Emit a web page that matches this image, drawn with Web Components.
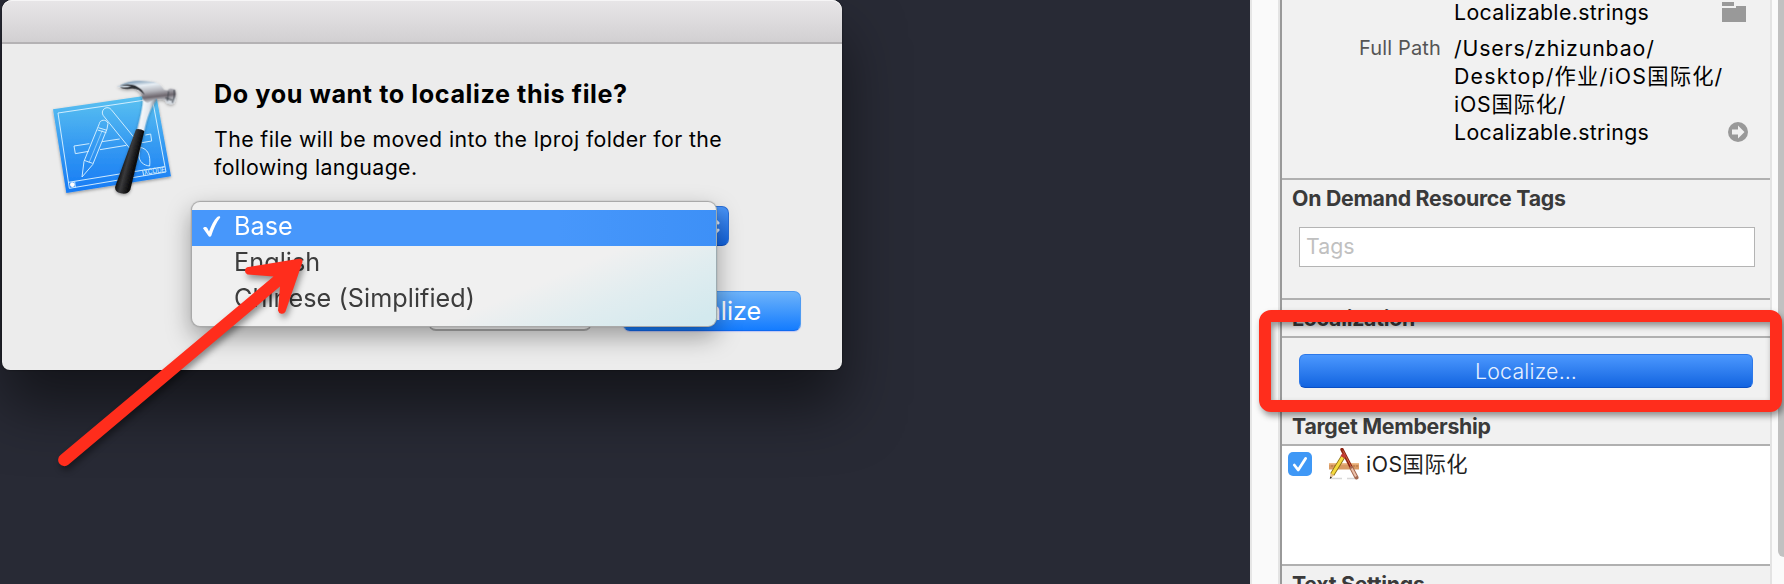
<!DOCTYPE html>
<html lang="en">
<head>
<meta charset="utf-8">
<title>Localize</title>
<style>
  html, body{
    margin: 0;
    width: 1784px;
    height: 584px;
    overflow: hidden;
  }
  body{
    font-family: Inter, "Noto Sans CJK SC", sans-serif;
    background: #282a35;
  }
</style>
</head>
<body>
<xcode-desktop>
  <sheet-dialog slot="editor">
    <xcode-icon slot="icon"></xcode-icon>
    <span slot="title">Do you want to localize this file?</span>
    <span slot="message">The file will be moved into the lproj folder for the following language.</span>
    <language-picker slot="field">
      <language-option selected>Base</language-option>
      <language-option>English</language-option>
      <language-option>Chinese (Simplified)</language-option>
    </language-picker>
    <push-button slot="actions" class="cancel"></push-button>
    <push-button slot="actions" kind="default">Localize</push-button>
  </sheet-dialog>

  <file-inspector slot="inspector">
    <path-info>
      <path-row icon="folder">Localizable.strings</path-row>
      <path-row label="Full Path" icon="reveal"><div style="letter-spacing: .85px">/Users/zhizunbao/</div><div style="letter-spacing: 1.2px">Desktop/作业/iOS国际化/</div><div style="letter-spacing: .8px">iOS国际化/</div><div>Localizable.strings</div></path-row>
    </path-info>
    <inspector-section style="--body: 82px">
      <span slot="heading">On Demand Resource Tags</span>
      <tags-field></tags-field>
    </inspector-section>
    <inspector-section ruled style="--body: 68px">
      <span slot="heading">Localization</span>
      <push-button kind="wide">Localize…</push-button>
    </inspector-section>
    <inspector-section ruled white style="--body: 118px">
      <span slot="heading">Target Membership</span>
      <target-row>iOS国际化</target-row>
    </inspector-section>
    <inspector-section style="--body: 40px">
      <span slot="heading">Text Settings</span>
    </inspector-section>
  </file-inspector>

  <arrow-mark slot="marks"></arrow-mark>
  <frame-mark slot="marks"></frame-mark>
</xcode-desktop>

<script>
class BaseElement extends HTMLElement{
  constructor(){
    super();
    this.attachShadow({mode: 'open'});
  }
  connectedCallback(){
    this.shadowRoot.innerHTML = `<style>${this.constructor.styles}</style>${this.render()}`;
  }
}

class XcodeDesktop extends BaseElement{
  static get styles(){
    return /* css */ `
      :host{
        display: flex;
        position: relative;
        width: 1784px;
        height: 584px;
        overflow: hidden;
      }
      .editor{
        width: 1248px;
        flex: none;
        padding-inline-start: 2px;
        background: #282a35;
        overflow: hidden;
      }
      .inspector{
        flex: 1;
        min-width: 0;
      }
    `
  }
  render(){
    return /* html */ `
      <div class="editor"><slot name="editor"></slot></div>
      <div class="inspector"><slot name="inspector"></slot></div>
      <slot name="marks"></slot>
    `
  }
}

class SheetDialog extends BaseElement{
  static get styles(){
    return /* css */ `
      :host{
        display: block;
        box-sizing: border-box;
        width: 840px;
        height: 370px;
        border-radius: 10px 10px 8px 8px;
        background: #ececec;
        box-shadow: 0 0 2px rgba(0,0,0,.6), 0 36px 60px rgba(0,0,0,.5);
      }
      .titlebar{
        box-sizing: border-box;
        height: 44px;
        border-radius: 10px 10px 0 0;
        border-bottom: 2px solid #b4b2b4;
        background: linear-gradient(#e8e6e8, #d2d0d2);
        box-shadow: inset 0 1px 0 #f6f5f6;
      }
      .content{
        display: grid;
        grid-template-columns: 150px 1fr;
        column-gap: 24px;
        padding-inline-start: 38px;
      }
      .icon{
        padding-block-start: 26px;
      }
      .text{
        padding-block-start: 34px;
      }
      h1{
        margin: 0 0 15px;
        font-size: 25.2px;
        line-height: 32px;
        font-weight: 700;
        letter-spacing: .58px;
        color: #000;
      }
      p{
        margin: 0 0 25px;
        width: 530px;
        font-size: 21.3px;
        line-height: 28px;
        font-weight: 430;
        letter-spacing: .4px;
        color: #000;
      }
      .actions{
        display: flex;
        justify-content: flex-end;
        gap: 31px;
        margin-block-start: 45px;
        padding-inline-end: 41px;
      }
    `
  }
  render(){
    return /* html */ `
      <div class="titlebar"></div>
      <div class="content">
        <div class="icon"><slot name="icon"></slot></div>
        <div class="text">
          <h1><slot name="title"></slot></h1>
          <p><slot name="message"></slot></p>
          <slot name="field"></slot>
          <div class="actions"><slot name="actions"></slot></div>
        </div>
      </div>
    `
  }
}

class XcodeIcon extends BaseElement{
  static get styles(){
    return /* css */ `
      :host{
        display: block;
        width: 150px;
        height: 140px;
      }
      svg{
        display: block;
      }
    `
  }
  render(){
    return /* html */ `
      <svg width="150" height="140" viewBox="0 0 450 420">
        <defs>
          <linearGradient id="paper" x1="0" y1="0" x2="0" y2="1">
            <stop offset="0" stop-color="#5cc3f0"/>
            <stop offset=".5" stop-color="#369bf2"/>
            <stop offset="1" stop-color="#157af5"/>
          </linearGradient>
          <linearGradient id="steel" gradientUnits="userSpaceOnUse" x1="310" y1="32" x2="318" y2="100">
            <stop offset="0" stop-color="#8ba6bd"/>
            <stop offset=".2" stop-color="#e8eff5"/>
            <stop offset=".5" stop-color="#b3b4bb"/>
            <stop offset=".75" stop-color="#6d666d"/>
            <stop offset="1" stop-color="#d5dbe2"/>
          </linearGradient>
          <linearGradient id="neck" x1="0" y1="0" x2="1" y2=".25">
            <stop offset="0" stop-color="#77808c"/>
            <stop offset=".35" stop-color="#f4f7fa"/>
            <stop offset=".65" stop-color="#dfe6ee"/>
            <stop offset="1" stop-color="#5d6773"/>
          </linearGradient>
          <linearGradient id="grip" gradientUnits="userSpaceOnUse" x1="250" y1="260" x2="288" y2="270">
            <stop offset="0" stop-color="#111"/>
            <stop offset=".4" stop-color="#3a3a3c"/>
            <stop offset="1" stop-color="#0b0b0d"/>
          </linearGradient>
          <filter id="soft" x="-20%" y="-20%" width="140%" height="150%">
            <feDropShadow dx="0" dy="4" stdDeviation="4" flood-opacity=".35"/>
          </filter>
        </defs>
        <path d="M39 118 348 73 393 319 79 369Z" fill="url(#paper)" filter="url(#soft)"/>
        <g fill="none" stroke="#d9f1ff" stroke-width="2.8" stroke-linejoin="round">
          <path d="M54 129 337 87 378 306 88 355Z"/>
          <path d="M85 337 374 290M104 335l2 18M308 301l3 16"/>
          <path d="M102 228 148 221M102 228l4 23 40-7M186 215l53-8M180 239l79-13M316 195l16-3 3 21-29 5"/>
          <path d="M190 137a13 13 0 0 1 24-18l80 98-20 24Z"/>
          <path d="M300 232c24 4 32 24 29 56-19-2-31-13-32-30Z"/>
          <path d="M178 161c1-12 21-15 26-1l-3 17-43 107-32 37 6-47 46-113Z"/>
          <path d="M175 173l26 8M173 180l26 8M132 271l26 9"/>
          <path d="M187 181l-40 97" stroke-width="1.600"/>
        </g>
        <circle cx="97" cy="344" r="7" fill="#fff"/>
        <text x="313" y="315" transform="rotate(-8 313 315)" font-family="Inter, sans-serif" font-size="23" textLength="64" lengthAdjust="spacingAndGlyphs" fill="#d9f1ff">XCODE</text>
        <g filter="url(#soft)">
          <path d="M306 80C312 96 306 120 291 181L312 185C321 138 333 111 351 88Z" fill="url(#neck)"/>
          <path d="M238 48c18-14 48-18 96-13 20 2 31 11 38 25l11 1c4-5 8-7 12-5l11 3c3 12 1 30-5 41-8 4-14 2-21-1l-4-9-22-3c-14-1-23 9-31 12-8-4-16-9-18-24-8-16-21-24-40-23-14 0-20 2-36-4Z" fill="url(#steel)"/>
          <path d="M238 47c20-6 38-5 52 2 12 6 20 14 24 26-14-16-28-22-44-19-12 2-22 1-30-5 12 2 24 1 34-2-12-3-24-3-36-2Z" fill="#2b2d31"/>
          <path d="M386 64l-4 29" stroke="#40454d" stroke-width="5" opacity=".55"/>
          <path d="M402 60c2 12 0 27-5 39" fill="none" stroke="#3c4048" stroke-width="4" opacity=".65"/>
          <path d="M376 83l22 8" stroke="#2f3339" stroke-width="7" opacity=".45"/>
          <path d="M288 178q12 -3 25 5L271 359q-8 16-29 11-20-4-16-21Z" fill="url(#grip)"/>
        </g>
      </svg>
    `
  }
}

class LanguagePicker extends BaseElement{
  static get styles(){
    return /* css */ `
      :host{
        display: block;
        position: relative;
        width: 515px;
        height: 40px;
      }
      .control{
        box-sizing: border-box;
        display: flex;
        justify-content: flex-end;
        align-items: center;
        width: 100%;
        height: 40px;
        padding-inline-end: 7px;
        border: 1px solid #2a6fd8;
        border-bottom-color: #0b4fc0;
        border-radius: 7px;
        background: linear-gradient(#4a95f8, #1263de);
      }
      /* the open menu lies over the control and the sheet buttons */
      .menu{
        box-sizing: border-box;
        position: absolute;
        top: -5px;
        left: -23px;
        width: 526px;
        height: 126px;
        padding-block-start: 8px;
        border: 1px solid #a9a9a9;
        border-right-color: #9dabb0;
        border-radius: 9px;
        background:
          linear-gradient(157deg, rgba(212,234,239,0) 66%, rgba(212,234,239,.55) 80%, #d3e9ee 96%),
          #f0f0f0;
        box-shadow: 0 10px 24px rgba(0,0,0,.34), 0 0 2px rgba(0,0,0,.2);
        z-index: 1;
      }
    `
  }
  render(){
    return /* html */ `
      <div class="control">
        <svg width="14" height="28" viewBox="0 0 14 28" fill="none" stroke="#d8e8ff" stroke-width="3" stroke-linecap="round" stroke-linejoin="round">
          <path d="M0 11 5.500 5.500 11 11M0 18 5.500 23.500 11 18"/>
        </svg>
      </div>
      <div class="menu"><slot></slot></div>
    `
  }
}

class LanguageOption extends BaseElement{
  static get styles(){
    return /* css */ `
      :host{
        display: grid;
        grid-template-columns: 32px 1fr;
        align-items: start;
        height: 36px;
        padding-inline-start: 10px;
        font-size: 25.2px;
        line-height: 33px;
        font-weight: 430;
        letter-spacing: .06px;
        color: #3c3c3c;
      }
      :host([selected]){
        color: #fff;
        background: linear-gradient(90deg, #4797fb 70%, #3d90f7);
      }
      svg{
        margin-block-start: 6px;
        visibility: hidden;
      }
      :host([selected]) svg{
        visibility: visible;
      }
    `
  }
  render(){
    return /* html */ `
      <svg width="20" height="22" viewBox="0 0 20 22">
        <path d="M1 12.200c1-1.600 3.400-1.700 4.400 0l1.600 3.400C9.300 9.500 11.800 4 15.200 1c1.200-1 3.200-.9 3 .4C14.200 6.500 11.500 13 9.300 19.800c-.5 1.400-2.400 1.400-3 0Z" fill="#fff"/>
      </svg>
      <span><slot></slot></span>
    `
  }
}

class PushButton extends BaseElement{
  static get styles(){
    return /* css */ `
      :host{
        box-sizing: border-box;
        display: flex;
        justify-content: center;
        align-items: center;
        width: 164px;
        height: 40px;
        border: 1px solid #c4c4c4;
        border-bottom: 2px solid #adadad;
        border-radius: 8px;
        background: #fff;
        font-size: 25.2px;
        line-height: 38px;
      }
      :host([kind="default"]){
        width: 178px;
        border: 1px solid #4f9bf1;
        border-bottom-color: #0f6af0;
        border-radius: 7px;
        background: linear-gradient(#6db3fa, #147cff);
        color: #fff;
        box-shadow: 0 1px 1px rgba(90,110,255,.3);
      }
      :host([kind="wide"]){
        width: auto;
        height: 34px;
        margin: 16px 17px 0;
        border: 1px solid #2d78e8;
        border-bottom: 1px solid #0a4fc4;
        border-radius: 6px;
        background: linear-gradient(#4c98fe, #1264e0);
        font-size: 21.3px;
        line-height: 34px;
        font-weight: 350;
        letter-spacing: .2px;
        color: #e6f0ff;
      }
    `
  }
  render(){
    return `<span><slot></slot></span>`
  }
}

class FileInspector extends BaseElement{
  static get styles(){
    return /* css */ `
      :host{
        display: grid;
        grid-template-columns: 30px 1fr 14px;
        height: 584px;
        background: #fafafa;
      }
      .gutter{
        box-sizing: border-box;
        border-left: 2px solid #e6e6e6;
        border-right: 2px solid #e4e4e4;
      }
      .panel{
        box-sizing: border-box;
        min-width: 0;
        height: 584px;
        overflow: hidden;
        border-left: 2px solid #999;
        background: #f1f1f1;
      }
      .scroll{
        box-sizing: border-box;
        display: flex;
        justify-content: flex-end;
        border-left: 2px solid #e3e3e3;
      }
      .thumb{
        width: 6px;
        height: 557px;
        border-radius: 0 0 0 7px;
        background: #c1c1c1;
      }
    `
  }
  render(){
    return /* html */ `
      <div class="gutter"></div>
      <div class="panel"><slot></slot></div>
      <div class="scroll"><div class="thumb"></div></div>
    `
  }
}

class PathInfo extends BaseElement{
  static get styles(){
    return /* css */ `
      :host{
        box-sizing: border-box;
        display: flex;
        flex-direction: column;
        gap: 8px;
        height: 180px;
        border-bottom: 2px solid #b0b0b0;
      }
      ::slotted(path-row:first-child){
        margin-block-start: -2px;
      }
    `
  }
  render(){
    return `<slot></slot>`
  }
}

class PathRow extends BaseElement{
  static get styles(){
    return /* css */ `
      :host{
        display: grid;
        grid-template-columns: 159px 1fr 36px;
        column-gap: 13px;
        padding-inline-end: 13px;
        font-size: 21.3px;
        line-height: 28px;
        font-weight: 430;
        color: #000;
        white-space: nowrap;
      }
      .label{
        text-align: right;
        font-size: 20px;
        letter-spacing: .15px;
        color: #555;
      }
      .value{
        min-width: 0;
        letter-spacing: .35px;
      }
      .icon{
        display: flex;
        align-items: flex-end;
      }
      svg{
        display: block;
      }
      .folder{
        margin-block-end: 4px;
        margin-inline-start: 1px;
      }
      .reveal{
        margin-block-end: 4px;
        margin-inline-start: 7px;
      }
    `
  }
  render(){
    const icons = {
      folder: `<svg class="folder" width="24" height="20" viewBox="0 0 24 20"><path d="M0 0h12v4H0ZM0 6h14V4h10v16H0Z" fill="#999"/></svg>`,
      reveal: `<svg class="reveal" width="20" height="20" viewBox="0 0 20 20"><circle cx="10" cy="10" r="10" fill="#999"/><path d="M4 7.500h6V3.500l6.500 6.500-6.500 6.500v-4H4Z" fill="#f1f1f1"/></svg>`
    };
    return /* html */ `
      <div class="label">${this.getAttribute('label') || ''}</div>
      <div class="value"><slot></slot></div>
      <div class="icon">${icons[this.getAttribute('icon')] || ''}</div>
    `
  }
}

class InspectorSection extends BaseElement{
  static get styles(){
    return /* css */ `
      :host{
        display: block;
      }
      h2{
        margin: 0;
        height: 36px;
        padding-inline-start: 10px;
        font-size: 21.3px;
        line-height: 36px;
        font-weight: 650;
        letter-spacing: -.27px;
        color: #3a3a3a;
      }
      :host([ruled]) h2{
        border-bottom: 2px solid #b0b0b0;
      }
      .body{
        height: var(--body);
        border-bottom: 2px solid #b0b0b0;
        overflow: hidden;
      }
      :host([white]) .body{
        background: #fff;
      }
    `
  }
  render(){
    return /* html */ `
      <h2><slot name="heading"></slot></h2>
      <div class="body"><slot></slot></div>
    `
  }
}

class TagsField extends BaseElement{
  static get styles(){
    return /* css */ `
      :host{
        box-sizing: border-box;
        display: block;
        height: 40px;
        margin: 11px 15px 0 17px;
        padding-inline-start: 6px;
        border: 1px solid #b4b4b4;
        background: #fff;
        font-size: 21.3px;
        line-height: 36px;
        color: #c0c0c0;
      }
    `
  }
  render(){
    return `<span>Tags</span>`
  }
}

class TargetRow extends BaseElement{
  static get styles(){
    return /* css */ `
      :host{
        display: flex;
        align-items: center;
        height: 36px;
        padding-inline-start: 6px;
        font-size: 21.3px;
        line-height: 36px;
        letter-spacing: .5px;
        color: #1f1f1f;
      }
      .check{
        margin-inline-end: 17px;
      }
      .app{
        margin-inline-end: 7px;
      }
    `
  }
  render(){
    return /* html */ `
      <svg class="check" width="24" height="24" viewBox="0 0 24 24">
        <rect width="24" height="24" rx="5" fill="#3f98f6"/>
        <path d="M6.300 13 10.200 18 17.600 6.500" fill="none" stroke="#fff" stroke-width="2.800" stroke-linecap="round" stroke-linejoin="round"/>
      </svg>
      <svg class="app" width="30" height="32" viewBox="0 0 30 32">
        <path d="M2 30.500h11M18 30.500h10" stroke="#d8d8d8" stroke-width="1.500"/>
        <path d="M0 15h30v6.500H0Z" fill="#d99a63"/>
        <path d="M0 15h30v1.500H0Z" fill="#eebd8c"/>
        <path d="M3 17v2M6 17v2M22 17v2M25 17v2M28 17v2" stroke="#a8683a" stroke-width=".8"/>
        <path d="M13 1.500 22.500 20" stroke="#8d2414" stroke-width="3.400" stroke-linecap="round"/>
        <path d="M13.800 2.500 22.300 19" stroke="#d0603f" stroke-width="1"/>
        <path d="M22.500 20 27.500 29.500" stroke="#a46a52" stroke-width="4" stroke-linecap="round"/>
        <path d="M22.700 20.500 27 28.500" stroke="#eec2ac" stroke-width="2"/>
        <path d="M14.500 8 3.200 26.500" stroke="#8a6d12" stroke-width="4.600"/>
        <path d="M14.300 8.300 3.300 26.300" stroke="#f5da3e" stroke-width="3"/>
        <path d="M15.400 6.200 13.600 9.200" stroke="#c23a35" stroke-width="4.600"/>
        <path d="M1.400 25.200 5.200 27.600 1 30.800Z" fill="#e6c08e"/>
        <path d="M1.200 28.400 3 29.500.8 31Z" fill="#222"/>
      </svg>
      <span><slot></slot></span>
    `
  }
}

class ArrowMark extends BaseElement{
  static get styles(){
    return /* css */ `
      :host{
        position: absolute;
        top: 0;
        left: 0;
        z-index: 5;
      }
      svg{
        display: block;
        filter: drop-shadow(2px 4px 3px rgba(0,0,0,.4));
      }
    `
  }
  render(){
    return /* html */ `
      <svg width="340" height="500" viewBox="0 0 340 500">
        <path d="M60.500 455 273.500 276.500 247.500 274.500A4 4 0 0 1 247 267.300L299 258.800Q303.800 258.500 302 263.500L285.500 311.500A4 4 0 0 1 278 310.500L280 286.500 68.300 464.800A6 6 0 0 1 60.500 455Z" fill="#ff2d1c"/>
      </svg>
    `
  }
}

class FrameMark extends BaseElement{
  static get styles(){
    return /* css */ `
      :host{
        box-sizing: border-box;
        position: absolute;
        top: 310px;
        left: 1259px;
        width: 523px;
        height: 102px;
        border: 12px solid #ff2d1c;
        border-radius: 12px;
        filter: drop-shadow(2px 4px 3px rgba(0,0,0,.4));
        z-index: 5;
      }
    `
  }
  render(){
    return ``
  }
}

customElements.define('xcode-desktop', XcodeDesktop);
customElements.define('sheet-dialog', SheetDialog);
customElements.define('xcode-icon', XcodeIcon);
customElements.define('language-picker', LanguagePicker);
customElements.define('language-option', LanguageOption);
customElements.define('push-button', PushButton);
customElements.define('file-inspector', FileInspector);
customElements.define('path-info', PathInfo);
customElements.define('path-row', PathRow);
customElements.define('inspector-section', InspectorSection);
customElements.define('tags-field', TagsField);
customElements.define('target-row', TargetRow);
customElements.define('arrow-mark', ArrowMark);
customElements.define('frame-mark', FrameMark);
</script>
</body>
</html>
